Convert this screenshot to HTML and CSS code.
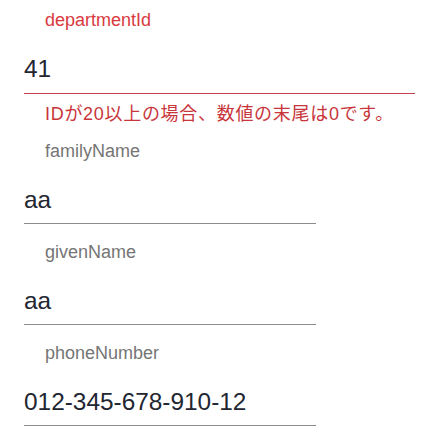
FILE: index.html
```html
<html>
<head>
<meta charset="utf-8">
<title>employee</title>
<link rel="stylesheet" href="styles.css">
</head>
<body>

<div class="form">

<!-- departmentId (erreur) -->
<div class="field error wide">
	<div class="label">departmentId</div>
	<div class="input">41</div>
	<div class="helper">IDが20以上の場合、数値の末尾は0です。</div>
</div>

<!-- familyName -->
<div class="field">
	<div class="label">familyName</div>
	<div class="input">aa</div>
</div>

<!-- givenName -->
<div class="field">
	<div class="label">givenName</div>
	<div class="input">aa</div>
</div>

<!-- phoneNumber -->
<div class="field">
	<div class="label">phoneNumber</div>
	<div class="input">012-345-678-910-12</div>
</div>

</div>

</body>
</html>
```

FILE: styles.css
```css
body {margin:8px; background-color:#FFFFFF; font-family:"Liberation Sans", Arial, "Noto Sans CJK JP", sans-serif;}

.form {padding-left:16px;}

.field {width:292px; margin-bottom:16px;}
.field.wide {width:391px; margin-bottom:13px;}

.label {font-size:18px; line-height:24px; height:24px; padding-left:21px; color:#757575; margin-bottom:21px;}
.input {font-size:24.4px; line-height:32px; font-weight:normal; color:#222631; padding-bottom:7px; border-bottom:1px solid #8C8C8C;}
.helper {font-size:18px; line-height:24px; padding-left:21px; margin-top:8px; letter-spacing:0.7px; color:#C8353A;}

.error .label {color:#D83A3F;}
.error .input {padding-bottom:8px; border-bottom:1px solid #C4404A;}
```
